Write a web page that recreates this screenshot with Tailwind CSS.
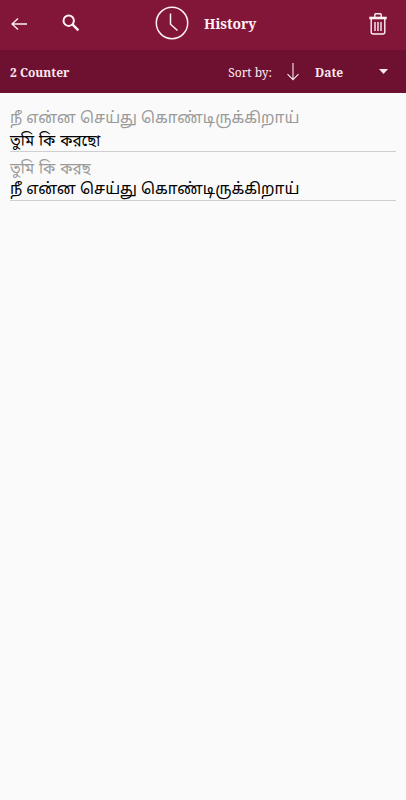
<!DOCTYPE html>
<html lang="en"><head><meta charset="utf-8"><title>History</title>
<script src="https://cdn.jsdelivr.net/npm/@tailwindcss/browser@4"></script></head>
<body class="bg-[#fafafa] font-['Noto_Serif','Liberation_Serif',serif]">
<header class="flex h-[50px] items-center bg-[#811638] text-[#fff0f5]">
<svg class="ml-[11px] mt-[-3px] h-4 w-4 shrink-0" viewBox="0 0 16 16" fill="none" stroke="currentColor" stroke-width="1.3"><path d="M16 8H1M7 2.5 1 8l6 5.5"/></svg>
<svg class="ml-[35px] mt-[-4px] h-[18px] w-[18px] shrink-0" viewBox="0 0 18 18" fill="none" stroke="currentColor"><circle cx="6.7" cy="6.7" r="5.2" stroke-width="2"/><path d="m10.7 10.7 5.7 5.7" stroke-width="2.4"/></svg>
<svg class="ml-[75px] mt-[-4px] h-[34px] w-[34px] shrink-0" viewBox="0 0 34 34" fill="none" stroke="currentColor" stroke-width="1.5"><circle cx="17" cy="17" r="15.7"/><path d="M15.5 7.5v10.7l7 6.3"/></svg>
<h1 class="ml-[15px] mt-[-2px] text-[13.9px] font-bold">History</h1>
<svg class="ml-auto mr-[19px] mt-[-3px] h-[22px] w-[18px] shrink-0" viewBox="0 0 18 22" fill="none" stroke="currentColor" stroke-width="1.4"><path d="M5.8 4V1.5q0-.8.8-.8h4.8q.8 0 .8.8V4"/><path d="M.3 5h17.4" stroke-width="2.6"/><path d="M2.2 6v13q0 2 2 2h9.6q2 0 2-2V6M6 9v9M9 9v9M12 9v9"/></svg>
</header>
<section class="flex h-[43px] items-center bg-[#6e102f] pl-[10px] pr-[18px] text-[12px] text-[#fbe8ef]">
<span class="pt-[2px] font-bold">2 Counter</span>
<span class="ml-auto pt-[2px]">Sort by:</span>
<svg class="ml-[15px] h-[18px] w-3 shrink-0" viewBox="0 0 12 18" fill="none" stroke="currentColor" stroke-width="1.1"><path d="M6 0v16.5M.5 11.2 6 16.7l5.5-5.5"/></svg>
<span class="ml-4 w-[64px] pt-[2px] font-bold">Date</span>
<svg class="h-[5px] w-[9px] shrink-0" viewBox="0 0 9 5" fill="currentColor"><path d="M0 0h9L4.5 5z"/></svg>
</section>
<main class="px-[10px] pt-[14px] text-black">
<article class="h-[45px] border-b border-[#cfcfcf] whitespace-nowrap">
<p class="h-[22px] pt-[2px] font-['Noto_Sans_Tamil','Noto_Sans',sans-serif] text-[15.5px] leading-[22px] text-[#9a9a9a]">நீ என்ன செய்து கொண்டிருக்கிறாய்</p>
<p class="h-[22px] pt-[2px] font-['Noto_Sans_Bengali','Noto_Sans',sans-serif] text-[15.2px] leading-[22px] [word-spacing:1px]">তুমি কি করছো</p>
</article>
<article class="mt-[4px] h-[45px] border-b border-[#cfcfcf] whitespace-nowrap">
<p class="h-[22px] pt-[3px] font-['Noto_Sans_Bengali','Noto_Sans',sans-serif] text-[15.2px] leading-[22px] text-[#9a9a9a] [word-spacing:1px]">তুমি কি করছ</p>
<p class="h-[22px] pt-[2px] font-['Noto_Sans_Tamil','Noto_Sans',sans-serif] text-[15.5px] leading-[22px]">நீ என்ன செய்து கொண்டிருக்கிறாய்</p>
</article>
</main></body></html>
